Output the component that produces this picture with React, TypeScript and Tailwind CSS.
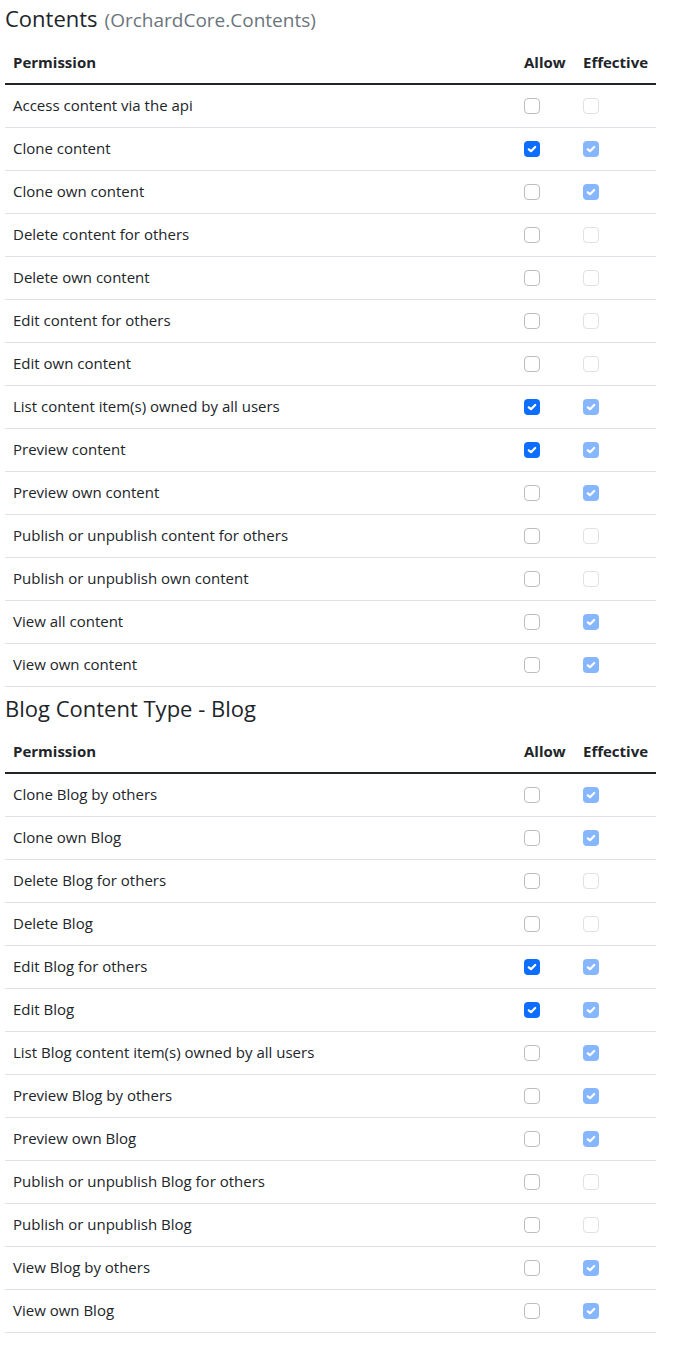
type Perm = { name: string; allow: boolean; effective: boolean }

const contents: Perm[] = [
  { name: "Access content via the api", allow: false, effective: false },
  { name: "Clone content", allow: true, effective: true },
  { name: "Clone own content", allow: false, effective: true },
  { name: "Delete content for others", allow: false, effective: false },
  { name: "Delete own content", allow: false, effective: false },
  { name: "Edit content for others", allow: false, effective: false },
  { name: "Edit own content", allow: false, effective: false },
  { name: "List content item(s) owned by all users", allow: true, effective: true },
  { name: "Preview content", allow: true, effective: true },
  { name: "Preview own content", allow: false, effective: true },
  { name: "Publish or unpublish content for others", allow: false, effective: false },
  { name: "Publish or unpublish own content", allow: false, effective: false },
  { name: "View all content", allow: false, effective: true },
  { name: "View own content", allow: false, effective: true },
]

const blog: Perm[] = [
  { name: "Clone Blog by others", allow: false, effective: true },
  { name: "Clone own Blog", allow: false, effective: true },
  { name: "Delete Blog for others", allow: false, effective: false },
  { name: "Delete Blog", allow: false, effective: false },
  { name: "Edit Blog for others", allow: true, effective: true },
  { name: "Edit Blog", allow: true, effective: true },
  { name: "List Blog content item(s) owned by all users", allow: false, effective: true },
  { name: "Preview Blog by others", allow: false, effective: true },
  { name: "Preview own Blog", allow: false, effective: true },
  { name: "Publish or unpublish Blog for others", allow: false, effective: false },
  { name: "Publish or unpublish Blog", allow: false, effective: false },
  { name: "View Blog by others", allow: false, effective: true },
  { name: "View own Blog", allow: false, effective: true },
]

function Check({ checked, disabled }: { checked: boolean; disabled?: boolean }) {
  if (checked) {
    return (
      <span
        className={`flex h-4 w-4 items-center justify-center rounded-[4px] ${
          disabled ? "bg-[#86b7fe]" : "bg-[#0d6efd]"
        }`}
      >
        <svg viewBox="0 0 16 16" className="h-4 w-4">
          <polyline
            points="4.8,8.3 7,10.2 11.2,6"
            fill="none"
            stroke="#fff"
            strokeWidth="2.2"
            strokeLinecap="round"
            strokeLinejoin="round"
          />
        </svg>
      </span>
    )
  }
  return (
    <span
      className={`block h-4 w-4 rounded-[4px] border bg-white ${
        disabled ? "border-[#e1e1e1]" : "border-[#bdbdbd]"
      }`}
    />
  )
}

function PermTable({ rows }: { rows: Perm[] }) {
  return (
    <div className="w-[651px] text-[#212529]">
      {/* header */}
      <div className="flex h-[44px] items-center border-b-2 border-[#212529] pt-[1px] text-[15px] font-bold">
        <div className="w-[511px] px-2">Permission</div>
        <div className="w-[59px] px-2">Allow</div>
        <div className="w-[81px] px-2">Effective</div>
      </div>
      {rows.map((r) => (
        <div
          key={r.name}
          className="flex h-[43px] items-center border-b border-[#dee2e6] text-[15px]"
        >
          <div className="w-[511px] px-2 pb-[1px]">{r.name}</div>
          <div className="w-[59px] px-2">
            <Check checked={r.allow} />
          </div>
          <div className="w-[81px] px-2">
            <Check checked={r.effective} disabled />
          </div>
        </div>
      ))}
    </div>
  )
}

export default function App() {
  return (
    <div
      className="min-h-[1352px] bg-white px-[5px]"
      style={{ fontFamily: '"Open Sans", "Noto Sans", sans-serif' }}
    >
      <div className="flex h-[41px] items-baseline pt-[2px] text-[22px] leading-[32px] text-[#212529]">
        Contents
        <span className="ml-[7px] text-[19px] text-[#6c757d]">(OrchardCore.Contents)</span>
      </div>
      <PermTable rows={contents} />
      <div className="flex h-[43px] items-center text-[22px] text-[#212529]">
        Blog Content Type - Blog
      </div>
      <PermTable rows={blog} />
    </div>
  )
}
